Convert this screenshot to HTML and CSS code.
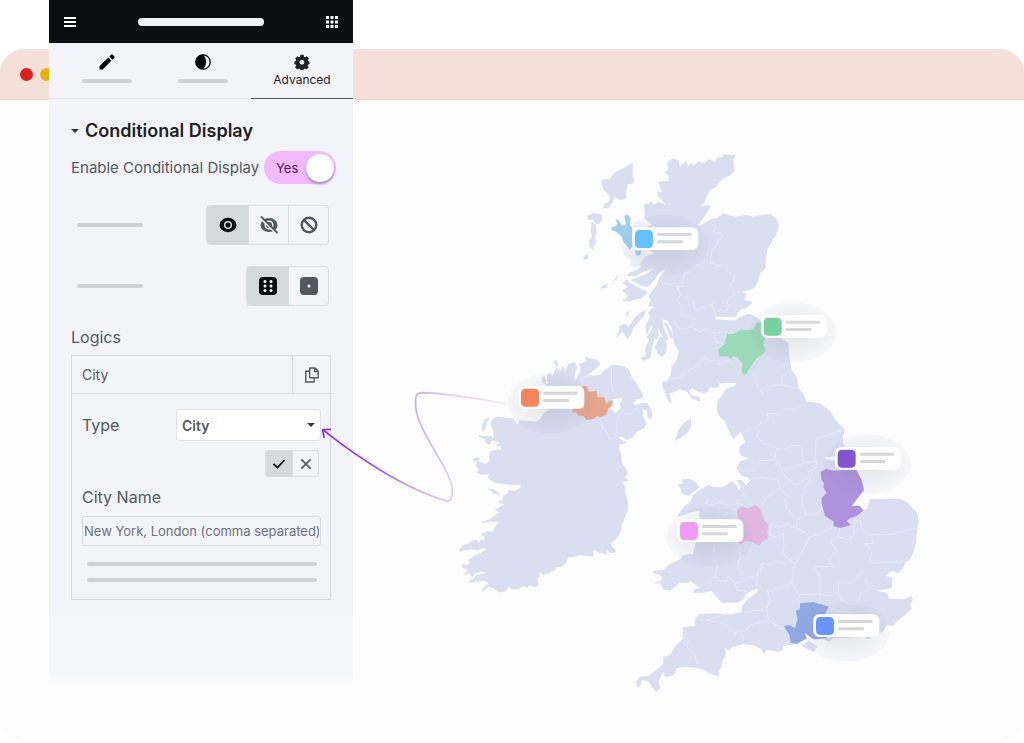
FILE: index.html
```
<!DOCTYPE html>
<html lang="en">
  <head>
    <meta charset="UTF-8" />
    <meta name="viewport" content="width=device-width, initial-scale=1.0" />
    <title>Conditional Display</title>
    <link rel="stylesheet" href="styles.css">
  </head>
  <body>
    <div class="stage">
      <div class="browser">
        <div class="browser-bar">
          <span class="dot dot-red"></span>
          <span class="dot dot-yellow"></span>
        </div>
        <div class="browser-body">
          <!-- map units are a third of a pixel -->
          <svg class="map" viewBox="1320 420 1500 1680" role="img" aria-label="Map of the United Kingdom and Ireland">
            <defs>
              <radialGradient id="shade">
                <stop offset="0" stop-color="#7b8087" stop-opacity="0.2" />
                <stop offset="0.6" stop-color="#7b8090" stop-opacity="0.11" />
                <stop offset="1" stop-color="#8088b0" stop-opacity="0.05" />
              </radialGradient>
              <symbol id="pin" overflow="visible">
                <ellipse cx="97" cy="52" rx="130" ry="90" fill="url(#shade)" />
                <rect width="198" height="68" rx="17" fill="#fff" />
                <rect x="8" y="8" width="54" height="54" rx="13" fill="currentColor" />
                <rect x="74" y="17" width="104" height="9" rx="4" fill="#d7d7d9" />
                <rect x="74" y="39" width="78" height="9" rx="4" fill="#d7d7d9" />
              </symbol>
            </defs>

            <!-- Ireland -->
            <g transform="translate(1320 1020)">
              <path class="land" d="M160 235L175 230 222 236 232 254 238 240 290 245 302 236 308 222 325 210 325 150 316 134 305 125 305 110 314 108 318 122 316 132 326 130 320 122 322 104 330 98 338 108 345 90 352 82 340 66 347 60 354 72 352 84 362 94 366 76 372 84 376 98 384 72 404 66 412 80 405 100 402 124 414 108 422 92 418 72 440 64 433 48 450 55 468 58 482 70 470 85 450 100 440 110 455 108 480 105 495 90 505 84 515 74 535 76 557 80 568 92 575 112 590 130 600 150 610 165 606 175 590 180 578 190 590 196 605 188 622 190 632 205 637 222 634 238 624 234 620 212 608 206 610 230 620 250 612 265 590 275 578 292 560 300 548 292 538 290 545 300 561 308 538 314 537 325 544 345 546 368 560 390 563 402 556 412 567 422 548 426 556 440 556 460 563 480 564 510 555 532 545 555 543 572 535 590 522 602 512 608 518 620 528 630 524 640 510 638 498 630 502 645 490 640 478 640 466 632 458 630 462 648 455 650 440 648 418 646 400 652 385 652 380 665 365 680 350 682 345 690 330 698 310 705 298 695 298 710 292 715 296 735 285 742 268 736 262 745 250 738 235 748 215 748 205 742 195 755 175 757 160 745 145 740 128 755 126 750 145 730 135 722 112 725 88 728 86 724 100 716 108 705 138 700 125 694 105 700 98 712 85 700 72 705 70 702 84 690 64 682 66 672 82 675 90 668 84 660 98 650 120 640 138 630 134 622 110 632 100 628 70 632 58 635 57 628 70 615 82 612 100 600 110 600 116 610 122 598 132 602 134 590 124 585 126 578 145 574 160 576 162 565 178 545 150 545 125 550 126 545 150 538 165 525 178 518 165 508 178 502 195 492 178 490 176 486 188 478 190 466 203 460 205 450 225 452 240 445 242 434 215 435 195 432 170 430 150 420 142 410 150 402 125 405 108 398 118 388 106 380 112 362 130 370 138 372 148 362 148 335 165 330 185 328 180 318 165 318 180 308 150 300 160 290 160 270 155 262 150 250Z" />
              <path class="land" d="M98 358L112 352 122 358 105 365ZM114 285L130 288 155 288 158 300 148 314 135 308 135 298 118 292ZM125 270L128 250 137 236 150 232 140 250 135 272ZM142 445L160 448 178 460 180 466 160 460Z" />
              <path class="border" d="M425 140L426 115 440 108 455 106M515 80L514 120 518 150 530 175M480 236L488 265 500 275 508 298 530 290 540 292M540 215L560 222 585 215 592 200 605 190M537 225L532 250 528 270 540 290" />
              <path fill="#fdfdfd" d="M505 205L518 198 520 178 548 174 540 190 542 205 525 220 515 208Z" />
              <path fill="#e6a68c" d="M425 138L437 138 448 155 470 152 472 172 492 172 500 192 510 182 518 184 516 194 506 205 498 225 480 232 470 228 462 236 440 240 430 228 415 226 410 218 396 215 400 205 432 205Z" />
            </g>

            <!-- Scotland -->
            <g transform="translate(1740 420)">
              <path class="land" d="M270 60L280 55 296 62 300 80 318 62 325 80 333 68 340 78 355 64 370 70 388 58 405 66 410 55 430 50 428 43 466 46 460 65 463 80 462 95 450 105 425 120 405 145 390 150 380 170 372 188 360 198 388 196 390 204 370 235 352 258 372 250 392 238 410 235 430 220 445 224 465 230 500 224 520 230 545 224 570 222 585 232 596 252 594 270 585 290 572 310 562 330 558 352 556 385 540 400 532 430 522 445 500 452 486 455 500 460 492 480 518 486 500 505 480 510 465 532 405 530 408 538 440 540 462 546 480 530 505 522 520 525 545 545 560 640 300 640 282 610 278 570 262 542 248 538 250 562 265 595 258 605 240 575 232 560 236 585 228 600 220 580 228 545 212 560 200 585 196 560 210 530 205 515 222 500 205 498 212 480 205 470 218 450 230 435 238 415 250 398 255 388 240 396 225 418 205 440 185 438 165 425 150 420 175 412 205 398 220 384 190 396 165 408 142 408 145 400 170 390 185 380 175 372 190 355 205 345 225 340 205 330 190 320 190 262 215 255 200 240 192 235 195 220 192 192 208 190 212 182 222 195 235 185 258 194 245 180 235 170 230 152 245 158 240 140 235 125 265 123 268 110 252 95 262 92 265 82 260 70Z" />
              <path class="land" d="M152 71L158 68 158 112 164 118 160 130 142 134 138 158 140 175 120 180 105 172 95 190 85 205 70 205 72 192 90 182 88 165 72 150 64 130 68 118 90 118 100 100 130 85ZM22 226L40 220 62 222 68 235 58 252 45 250 40 240 24 238ZM35 245L48 255 50 275 45 290 50 305 40 320 44 332 28 320 28 300 36 290 32 270ZM8 354L22 340 26 355 15 360ZM62 442L85 430 80 442 65 446ZM95 425L118 404 110 418ZM125 450L145 442 128 430 140 418 155 432 180 445 198 452 202 460 185 475 160 480 150 485 128 482 145 468ZM138 520L150 512 140 532Z" />
              <path fill="#f3f5fa" d="M160 248L178 240 190 262 160 262ZM130 322L160 325 200 335 205 345 190 355 170 385 150 378 158 360 130 345Z" />
              <path fill="#9fcfec" d="M133 228L142 222 152 235 150 255 156 262 158 320 148 327 130 305 125 290 108 275 94 270 95 262 108 258 112 250 106 238 115 240 128 258 138 252ZM165 332L185 332 180 345 170 348Z" />
              <path class="border" d="M400 238L395 250 405 265 400 275 430 285 415 300 410 320 395 330 390 368M390 368L378 362 365 370 345 378 335 392 315 402 308 425 275 436 245 428M390 368L420 378 438 372 442 392 465 412 452 435 465 462 442 480 445 500 438 515 420 508 405 518 395 498 400 486M308 425L310 440 290 440 302 465 290 478 310 510 300 530 320 525 345 535M400 498L385 492 365 505 345 510 340 485 318 470M282 545L310 560 330 572 360 555 372 580 405 575 440 580 465 560" />
            </g>

            <!-- Western isles, Borders and Cumbria -->
            <g transform="translate(1800 780)">
              <path class="land" d="M240 270L222 240 215 210 225 190 300 180 485 182 545 235 565 250 568 290 575 330 592 355 595 385 612 405 618 425 650 435 680 445 695 465 715 490 735 510 728 530 730 560 440 560 425 520 410 508 400 532 385 510 375 485 355 465 350 440 355 420 370 400 380 385 405 378 408 368 357 370 357 380 345 385 330 380 325 395 310 400 295 395 275 385 268 390 272 405 298 412 300 425 275 415 262 395 240 388 225 395 208 400 215 430 205 425 188 380 186 365 200 365 212 345 215 320 230 300 235 280Z" />
              <path class="land" d="M48 235L60 205 55 200 75 190 85 200 100 180 110 165 138 148 132 170 120 180 100 205 92 225 82 238 68 215ZM158 195L172 172 180 182 168 215 160 245 155 270 150 295 130 303 122 295 138 285 135 265 148 240 140 230 155 210ZM178 230L192 232 200 255 198 280 185 290 172 280 165 262 172 245ZM190 185L202 192 222 232 212 235Z" />
              <path class="border" d="M222 190L245 210 275 200 300 215 320 205 345 220 370 215 385 220M345 220L345 245 370 250M200 360L240 352 260 335 290 320 315 290 330 305 355 300 360 312 390 300M440 330L465 345 470 380 490 400 488 430 508 460 500 490 460 510 435 520M480 390L520 375 545 375 545 350 575 335M545 375L585 385 600 388M508 460L540 455 570 445 612 425M508 462L560 460 600 448 650 440" />
              <path fill="#9bdab8" d="M382 222L400 222 425 208 440 210 460 208 470 190 485 184 495 235 490 255 497 272 485 285 470 295 455 315 438 343 430 343 425 330 428 310 420 302 412 290 395 290 398 298 380 288 358 290 355 268 372 255Z" />
            </g>

            <!-- South coast -->
            <g transform="translate(1860 1620)">
              <path class="land" d="M238 -30L885 -30 885 10 882 35 868 60 855 68 850 85 835 100 815 92 797 108 818 112 815 145 770 152 800 158 808 176 850 178 875 168 878 180 870 195 876 205 855 225 830 245 820 258 800 255 790 275 775 280 745 298 730 290 640 295 625 306 610 296 585 300 570 290 555 278 560 295 530 312 490 318 488 330 478 335 440 330 432 342 425 328 400 316 370 312 335 322 330 332 312 322 318 335 316 350 308 360 305 382 295 395 298 410 265 400 255 390 235 385 200 380 170 385 162 405 135 412 130 395 115 425 122 445 108 455 95 440 88 425 65 420 62 438 52 442 48 425 60 410 85 408 110 390 130 370 130 350 150 345 165 320 190 295 188 262 225 258 225 235 240 222 290 220 330 225 365 215 365 200 385 175 410 158 415 145 380 160 370 180 350 188 305 188 290 172 275 152 250 158 220 158 222 148 240 145 210 122 205 130 180 128 150 152 130 148 120 130 102 130 128 118 120 105 98 100 100 92 130 90 150 72 180 58 190 45 218 42Z" />
              <path class="land" d="M545 318L565 302 592 318 580 336Z" />
              <path class="border" d="M285 15L278 50 292 75 285 110 265 130 240 138M285 120L320 125 325 108 345 130 370 122 412 105 410 142M345 130L350 150 382 155M412 105L415 90 428 68 455 75 500 60 520 75 518 100 515 130 480 145 448 155M518 100L520 135 538 165 535 190M580 80L600 110 600 170M538 165L590 162 625 168 655 155 655 130 700 125 715 105 735 90M655 155L665 180 700 195 720 185 718 165 752 140 735 115M442 150L450 185 440 205 445 240M255 240L310 225 350 222 400 212 440 212M255 240L310 250 340 278 380 270 390 255 445 240 480 265 492 265M340 278L370 290 368 312M190 270L205 300 200 320 225 345 235 385M626 200L660 215 690 218" />
              <path fill="#91a9e2" d="M528 212L540 208 540 190 580 186 600 192 626 200 615 222 620 295 580 298 570 290 555 278 560 295 530 312 512 308 508 285 492 258 510 255 525 265 532 240Z" />
            </g>

            <!-- North of England, Wales, East Anglia -->
            <g transform="translate(1980 1200)">
              <path class="land" d="M172 35L260 -20 480 10 512 35 528 65 555 90 545 108 546 125 560 145 530 168 495 172 500 178 530 182 588 208 605 240 612 270 600 285 575 318 600 318 610 332 622 325 630 297 720 296 745 310 772 340 776 370 770 400 768 430 755 460 748 480 730 490 640 500 100 500 60 475 85 470 102 458 118 430 118 332 100 335 70 345 50 350 70 322 90 305 100 285 120 270 145 255 160 262 190 262 215 242 230 255 238 273 242 260 228 240 245 240 258 256 270 240 262 232 245 228 230 205 240 185 265 175 240 165 238 140 258 125 250 115 260 92 240 95 222 118 212 105 210 80 195 55Z" />
              <path class="land" d="M45 122L55 90 70 70 92 55 94 75 85 95 65 112ZM52 255L68 250 65 238 90 236 105 245 120 262 100 275 85 288 65 280 62 265Z" />
              <path class="border" d="M260 88L295 82 300 70 325 60 322 40 355 42 380 25 400 28 430 15M295 85L292 110 310 130 350 145 345 175 355 185 340 205M350 145L375 148 400 135 425 138 430 190M355 185L365 210 390 205 410 198 430 190 470 182 468 205 445 215 452 245 435 255 440 275 425 285 428 310 435 345M465 180L468 118 500 105 550 90M235 205L270 215 285 205 300 182 345 180M270 240L300 232 355 240 358 262 385 290 375 300 378 325 405 350M365 212L385 240 410 255 425 245 452 220M250 255L252 290 275 310M358 265L325 290 315 300 310 320M130 285L145 300 135 310 160 315 175 305 210 318 232 310 250 315M190 355L195 342 232 340M435 345L410 360 408 385 440 400 447 412 435 440 415 470 400 500M330 375L360 380 385 372 400 382 425 388 430 400M330 380L330 405 345 410 370 400 372 440 368 458 385 475 405 490 400 510M447 412L505 390 520 378M435 345L470 340 485 325M540 384L535 410 510 420 530 455 505 480 520 500 460 500M535 410L570 420 585 395 575 380 600 355M600 355L605 385 635 410 640 430 615 430 635 450 625 440M635 405L700 402 740 388 776 385M635 458L630 480 645 490 730 485M240 430L240 470 232 500 250 525M300 525L308 488 330 495 350 485 375 490M165 425L160 470 172 495 165 535" />
              <path fill="#af92dd" d="M482 215L498 206 520 212 588 208 605 240 612 270 600 285 575 318 600 318 610 332 590 348 570 355 560 362 572 375 540 384 520 378 522 365 495 348 485 310 485 295 500 278 490 262 492 250 484 240Z" />
              <path fill="#e1b6e1" d="M232 330L245 320 265 325 285 315 300 325 308 348 315 365 325 372 322 395 325 415 305 425 298 438 275 425 255 422 240 434 235 428 250 420 248 365 232 350Z" />
            </g>

            <use href="#pin" x="1897" y="682" class="pin-sky" />
            <use href="#pin" x="2283" y="945" class="pin-green" />
            <use href="#pin" x="1555" y="1158" class="pin-orange" />
            <use href="#pin" x="2505" y="1341" class="pin-purple" />
            <use href="#pin" x="2032" y="1558" class="pin-pink" />
            <use href="#pin" x="2440" y="1843" class="pin-blue" />
          </svg>
        </div>
      </div>

      <div class="panel">
        <div class="topbar">
          <button type="button" class="icon-btn" aria-label="Menu">
            <svg width="12" height="10" viewBox="0 0 12 10" fill="#fff"><path d="M0 0h12v2H0zM0 4h12v2H0zM0 8h12v2H0z" /></svg>
          </button>
          <span class="topbar-title"></span>
          <button type="button" class="icon-btn" aria-label="Widgets">
            <svg width="12" height="12" viewBox="0 0 12 12" fill="#fff"><path d="M0 0h3v3H0zM4.5 0h3v3h-3zM9 0h3v3H9zM0 4.5h3v3H0zM4.5 4.5h3v3h-3zM9 4.5h3v3H9zM0 9h3v3H0zM4.5 9h3v3h-3zM9 9h3v3H9z" /></svg>
          </button>
        </div>

        <div class="tabs">
          <button type="button" class="tab" aria-label="Content">
            <svg width="16" height="16" viewBox="0 0 16 16"><path d="M0.500 12.300 9.200 3.600l3.200 3.200-8.700 8.700H.5zM10.200 2.600l1.900-1.900a1.200 1.200 0 0 1 1.700 0l1.500 1.500a1.200 1.200 0 0 1 0 1.700l-1.900 1.900z" /></svg>
            <span class="tab-line"></span>
          </button>
          <button type="button" class="tab" aria-label="Style">
            <svg width="16" height="16" viewBox="0 0 16 16"><circle cx="8" cy="8" r="7.200" fill="none" stroke="#000" stroke-width="1.300" /><path d="M8 .8a7.200 7.200 0 0 0 0 14.400c1.800-1.500 3-4.200 3-7.200S9.800 2.300 8 .8z" /></svg>
            <span class="tab-line"></span>
          </button>
          <button type="button" class="tab active">
            <svg width="16" height="16" viewBox="0 0 16 16" fill="#1f2124"><path fill-rule="evenodd" d="M6.400.8h3.200l.4 1.900 1 .5 1.700-1 2.200 2.200-1.100 1.700.4 1 1.300.3v2.800l-1.400.4-.4 1 1 1.700-2.200 2.200-1.600-1-1 .4-.4 1.300H6.500l-.4-1.300-1.100-.4-1.700 1-2.200-2.200 1.100-1.700-.5-1L.4 10.200V7.400l1.400-.4.4-1-1-1.600 2.200-2.200 1.700 1 .9-.5zM8 5.900a2.400 2.400 0 1 0 0 4.800 2.400 2.400 0 0 0 0-4.800z" /></svg>
            Advanced
          </button>
        </div>

        <div class="panel-body">
          <h2 class="section-title"><span class="caret"></span>Conditional Display</h2>

          <label class="row enable-row">
            <span>Enable Conditional Display</span>
            <span class="switch">
              <input type="checkbox" checked />
              <span>Yes</span>
            </span>
          </label>

          <div class="row option-row">
            <span class="placeholder-line"></span>
            <div class="btn-group">
              <button type="button" class="active" aria-label="Show">
                <svg width="18" height="18" viewBox="0 0 18 18"><ellipse cx="9" cy="9" rx="8.500" ry="7.200" fill="#0c0d0e" /><circle cx="9" cy="9" r="3.300" fill="none" stroke="#d5d8dc" stroke-width="1.500" /></svg>
              </button>
              <button type="button" aria-label="Hide">
                <svg width="18" height="18" viewBox="0 0 18 18"><ellipse cx="9" cy="9" rx="8.500" ry="7" fill="#515962" /><circle cx="9" cy="9" r="3.800" fill="none" stroke="#f3f4f9" stroke-width="1.500" /><path d="M0 2l17 16" stroke="#f3f4f9" stroke-width="2" /><path d="M1.500 1l15.500 15.500" stroke="#515962" stroke-width="1.800" stroke-linecap="round" /></svg>
              </button>
              <button type="button" aria-label="None">
                <svg width="18" height="18" viewBox="0 0 18 18" fill="none" stroke="#515962" stroke-width="2.400"><circle cx="9" cy="9" r="7.300" /><path d="M3.800 3.800l10.400 10.400" /></svg>
              </button>
            </div>
          </div>

          <div class="row option-row">
            <span class="placeholder-line"></span>
            <div class="btn-group">
              <button type="button" class="active" aria-label="Multiple conditions">
                <svg width="20" height="20" viewBox="0 0 20 20"><rect x="1" y="1" width="18" height="18" rx="4" fill="#0c0d0e" /><g fill="#fff"><circle cx="7" cy="5.500" r="1.500" /><circle cx="13" cy="5.500" r="1.500" /><circle cx="7" cy="10" r="1.500" /><circle cx="13" cy="10" r="1.500" /><circle cx="7" cy="14.500" r="1.500" /><circle cx="13" cy="14.500" r="1.500" /></g></svg>
              </button>
              <button type="button" aria-label="Single condition">
                <svg width="20" height="20" viewBox="0 0 20 20"><rect x="1" y="1" width="18" height="18" rx="4" fill="#515962" /><circle cx="10" cy="10" r="1.500" fill="#fff" /></svg>
              </button>
            </div>
          </div>

          <h3 class="logics-title">Logics</h3>

          <div class="logic">
            <div class="logic-head">
              <span class="logic-name">City</span>
              <button type="button" class="copy-btn" aria-label="Duplicate">
                <svg width="14" height="16" viewBox="0 0 14 16" fill="none" stroke="#515962" stroke-width="1.400" stroke-linejoin="round"><path d="M4.700 1h5.300l3.200 3.200v6.600H4.700zM9.500 1.200v3.300H13M4.500 4.200H.8V15h8.400v-4" /></svg>
              </button>
            </div>
            <div class="logic-body">
              <div class="row type-row">
                <label for="type">Type</label>
                <div class="select">
                  <select id="type">
                    <option>City</option>
                  </select>
                </div>
              </div>

              <div class="btn-group small">
                <button type="button" class="active" aria-label="Is">
                  <svg width="14" height="14" viewBox="0 0 14 14" fill="none" stroke="#0c0d0e" stroke-width="1.800"><path d="M1.500 7l4 3.500 7-7.500" /></svg>
                </button>
                <button type="button" aria-label="Is not">
                  <svg width="14" height="14" viewBox="0 0 14 14" fill="none" stroke="#515962" stroke-width="1.700"><path d="M2.300 2.300l9.400 9.400M11.700 2.300l-9.400 9.400" /></svg>
                </button>
              </div>

              <label class="city-label" for="city">City Name</label>
              <input type="text" id="city" class="city-input" placeholder="New York, London (comma separated)" />
              <span class="body-line"></span>
              <span class="body-line"></span>
            </div>
          </div>
        </div>
      </div>

      <!-- connector from the map to the type field -->
      <svg class="connector" width="200" height="120" viewBox="0 0 600 360" fill="none">
        <defs>
          <linearGradient id="fade" gradientUnits="userSpaceOnUse" x1="0" y1="0" x2="560" y2="0">
            <stop offset="0" stop-color="#8426f5" />
            <stop offset="0.250" stop-color="#9140f5" />
            <stop offset="0.500" stop-color="#cba6f8" />
            <stop offset="0.700" stop-color="#e0cbf9" />
            <stop offset="1" stop-color="#f3ecfd" />
          </linearGradient>
        </defs>
        <path d="M560 41C470 26 375 8 305 8 283 10 287 25 287 52 295 130 396 240 397 302 397 320 392 337 380 333 260 298 120 208 12 122" stroke="url(#fade)" stroke-width="5" />
        <path d="M12 142L8 119 31 118" stroke="#8426f5" stroke-width="5" stroke-linecap="round" />
      </svg>
    </div>
  </body>
</html>
```
FILE: styles.css
```
* {
  box-sizing: border-box;
}
body {
  margin: 0;
  background: #fff;
  color: #515962;
  font-family: Inter, "Liberation Sans", sans-serif;
  font-size: 16px;
}
button,
input,
select {
  font-family: inherit;
  color: inherit;
}
button {
  border: none;
  background: none;
  padding: 0;
  cursor: pointer;
}
svg {
  display: block;
}

/* browser and panel share one grid cell so the panel overlaps the window */
.stage {
  display: grid;
  position: relative;
  min-height: 100vh;
}
.browser,
.panel {
  grid-area: 1 / 1;
}
.browser {
  display: flex;
  flex-direction: column;
  margin-top: 49px;
  background: #fdfdfd;
  border-radius: 24px;
  overflow: hidden;
}
.browser-bar {
  display: flex;
  align-items: center;
  gap: 7px;
  height: 51px;
  padding-left: 20px;
  background: #f4e0d9;
  border-bottom: 1px solid #efcfc5;
}
.dot {
  width: 13px;
  height: 13px;
  border-radius: 50%;
}
.dot-red {
  background: #dc1f1f;
}
.dot-yellow {
  background: #e8b200;
}
.browser-body {
  flex: 1;
  display: flex;
  justify-content: flex-end;
  padding: 40px 84px 0 0;
}

.map {
  width: 500px;
  height: 560px;
}
.land {
  fill: #d9def0;
}
.border {
  fill: none;
  stroke: #e6e8f5;
  stroke-width: 3;
  stroke-linejoin: round;
}
.pin-sky {
  color: #64c0f8;
}
.pin-green {
  color: #78d09e;
}
.pin-orange {
  color: #f4855a;
}
.pin-purple {
  color: #8453cf;
}
.pin-pink {
  color: #f09bf8;
}
.pin-blue {
  color: #6a93fb;
}

.panel {
  position: relative;
  align-self: start;
  width: 304px;
  margin-left: 49px;
  padding-bottom: 86px;
  background: linear-gradient(to top, #fdfdfd, #f6f7fb 14px, #f6f7fb 70px, #f3f4f9 70px);
}
.topbar {
  display: flex;
  align-items: center;
  justify-content: space-between;
  height: 43px;
  padding: 0 15px;
  background: #0c0d0e;
}
.topbar-title {
  width: 126px;
  height: 8px;
  border-radius: 4px;
  background: #f3f4f6;
}

.tabs {
  display: grid;
  grid-template-columns: 96px 96px 1fr;
  height: 56px;
  padding-left: 10px;
  border-bottom: 1px solid #e3e5ea;
}
.tab {
  display: flex;
  flex-direction: column;
  align-items: center;
  padding-top: 11px;
  color: #1f2124;
  font-size: 12px;
  line-height: 20px;
}
.tab.active {
  margin-bottom: -1px;
  border-bottom: 1px solid #515962;
}
.tab-line {
  width: 50px;
  height: 4px;
  margin-top: 9px;
  border-radius: 2px;
  background: #cfcfda;
}

.panel-body {
  padding: 20px 22px 0;
}
.section-title {
  display: flex;
  align-items: center;
  gap: 6px;
  margin: 0;
  color: #1f2124;
  font-size: 18px;
  font-weight: 600;
  line-height: 24px;
}
.caret,
.select::after {
  border: 4px solid transparent;
  border-top-color: #32363b;
  border-bottom: none;
}
.row {
  display: flex;
  align-items: center;
  justify-content: space-between;
}
.enable-row {
  margin: 8px -5px 0 0;
  font-size: 15px;
  white-space: nowrap;
}
.switch {
  display: flex;
  flex-direction: row-reverse;
  align-items: center;
  justify-content: space-between;
  flex-shrink: 0;
  width: 72px;
  height: 33px;
  padding: 0 2px 0 12px;
  border-radius: 17px;
  background: #f2b9fc;
  color: #4c1d5c;
  font-size: 13px;
}
.switch input {
  appearance: none;
  width: 28px;
  height: 28px;
  margin: 0;
  border-radius: 50%;
  background: #fff;
  box-shadow: 0 2px 3px #a77fd0;
}
.option-row {
  margin-top: 21px;
  padding: 0 2px 0 6px;
}
.placeholder-line {
  width: 66px;
  height: 4px;
  border-radius: 2px;
  background: #cfcfda;
}
.btn-group {
  display: flex;
  border: 1px solid #dadce2;
  border-radius: 4px;
  overflow: hidden;
}
.btn-group button {
  display: grid;
  place-items: center;
  width: 40px;
  height: 38px;
}
.btn-group button + button {
  border-left: 1px solid #dadce2;
}
.btn-group button.active {
  width: 41px;
  background: #d5d8dc;
}
.logics-title {
  margin: 20px 0 7px;
  font-size: 16px;
  font-weight: 400;
  line-height: 22px;
}

.logic {
  border: 1px solid #d7d9df;
}
.logic-head {
  display: flex;
  height: 38px;
  border-bottom: 1px solid #d7d9df;
  font-size: 14px;
}
.logic-name {
  flex: 1;
  padding-left: 10px;
  line-height: 37px;
}
.copy-btn {
  display: grid;
  place-items: center;
  width: 38px;
  border-left: 1px solid #d7d9df;
}
.logic-body {
  display: flex;
  flex-direction: column;
  padding: 15px 9px 10px 10px;
}
.select {
  position: relative;
  width: 145px;
}
.select::after {
  content: "";
  position: absolute;
  top: 14px;
  right: 6px;
}
.select select {
  appearance: none;
  display: block;
  width: 100%;
  height: 32px;
  padding: 0 5px;
  border: 1px solid #dfe0ea;
  border-radius: 3px;
  background: #fff;
  font-size: 14px;
  font-weight: 600;
}
.small {
  align-self: flex-end;
  margin: 9px 2px 0 0;
  border-radius: 3px;
}
.btn-group.small button {
  width: 26px;
  height: 25px;
}
.city-label {
  margin: 9px 0 8px;
  line-height: 22px;
}
.city-input {
  width: 100%;
  height: 30px;
  margin-bottom: 11px;
  padding: 0 1px;
  border: 1px solid #d7d9df;
  border-radius: 3px;
  background: transparent;
  font-size: 13px;
  text-align: center;
}
.city-input::placeholder {
  color: #69727d;
}
.body-line {
  height: 4px;
  margin: 5px 4px 7px 5px;
  border-radius: 2px;
  background: #cfcfda;
}

.connector {
  position: absolute;
  top: 390px;
  left: 320px;
}
```
